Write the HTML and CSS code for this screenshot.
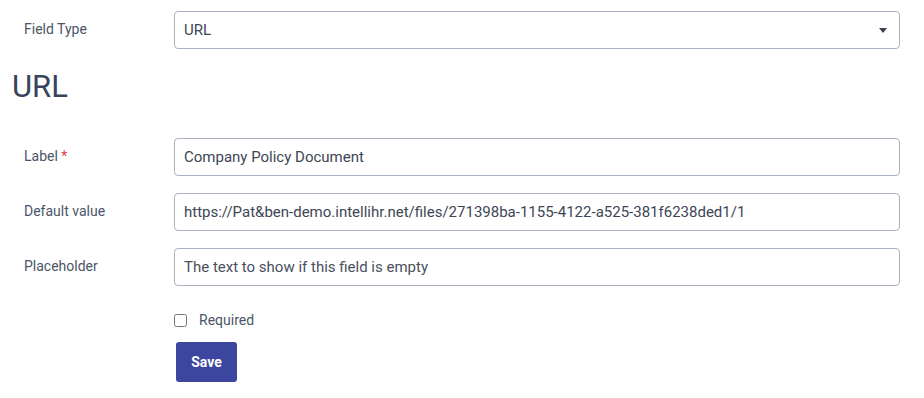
FILE: index.html
```html
<!DOCTYPE html>
<html lang="en">
<head>
    <meta charset="UTF-8">
    <meta name="viewport" content="width=device-width, initial-scale=1.0">
    <title>URL field</title>
    <link rel="stylesheet" href="styles.css">
</head>
<body>
<div class="field-editor">
    <div class="form-row">
        <label class="form-label">Field Type</label>
        <div class="select-box">
            <span>URL</span>
            <span class="select-caret"></span>
        </div>
    </div>

    <h2 class="section-title">URL</h2>

    <div class="form-row">
        <label class="form-label">Label <span class="req">*</span></label>
        <input class="text-input" value="Company Policy Document">
    </div>
    <div class="form-row">
        <label class="form-label">Default value</label>
        <input class="text-input" value="https://Pat&amp;ben-demo.intellihr.net/files/271398ba-1155-4122-a525-381f6238ded1/1">
    </div>
    <div class="form-row">
        <label class="form-label">Placeholder</label>
        <input class="text-input" placeholder="The text to show if this field is empty">
    </div>

    <div class="form-row check-row">
        <span></span>
        <label class="check-label"><input type="checkbox" class="check-box"> Required</label>
    </div>
    <div class="form-row">
        <span></span>
        <div><button class="save-button">Save</button></div>
    </div>
</div>
</body>
</html>
```

FILE: styles.css
```css
* { margin: 0; padding: 0; box-sizing: border-box; }
body {
    font-family: Roboto, 'Liberation Sans', Arial, sans-serif;
    background: #fff;
    color: #4a5568;
}
.field-editor { padding: 11px 24px 0 12px; }
.form-row {
    display: grid;
    grid-template-columns: 162px 1fr;
    align-items: center;
    margin-bottom: 17px;
}
.form-label {
    padding-left: 12px;
    font-size: 14px;
    color: #4a5568;
    align-self: start;
    padding-top: 10px;
}
.req { color: #e53e3e; }
.select-box, .text-input {
    height: 38px;
    width: 100%;
    border: 1px solid #aab3c2;
    border-radius: 4px;
    padding: 0 9px;
    font-family: inherit;
    font-size: 15px;
    color: #3d4655;
    background: #fff;
}
.select-box {
    display: flex;
    align-items: center;
    justify-content: space-between;
}
.select-caret {
    width: 0; height: 0;
    border-left: 4px solid transparent;
    border-right: 4px solid transparent;
    border-top: 5px solid #3b4250;
    margin-right: 3px;
}
.text-input::placeholder { color: #4a5060; opacity: 1; }
.section-title {
    font-size: 31px;
    font-weight: 400;
    line-height: 37px;
    color: #38445c;
    margin: 19px 0 33px 0;
}
.check-row { margin-top: 24px; margin-bottom: 12px; }
.check-label {
    display: flex;
    align-items: center;
    font-size: 14px;
    color: #4a5568;
    height: 20px;
}
.check-box {
    width: 13px; height: 13px;
    margin-right: 12px;
}
.save-button {
    background: #3d469f;
    color: #fff;
    border: none;
    border-radius: 3px;
    font-family: inherit;
    font-weight: bold;
    font-size: 14px;
    width: 61px;
    height: 40px;
    margin-left: 2px;
}
```
